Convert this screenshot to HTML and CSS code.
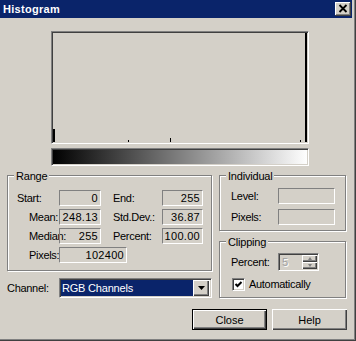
FILE: index.html
```html
<html>
	<head>
		<link rel="stylesheet" href="styles.css">
	</head>
	<body>
		<div class="window">
			<div class="frame">
				<div class="title-bar">
					<span class="title-text">Histogram</span>
					<div class="caption-btn">
						<svg width="10" height="9" viewBox="0 0 10 9"><path d="M1.5 1 L8.5 8 M8.5 1 L1.5 8" stroke="#000" stroke-width="1.8" fill="none"/></svg>
					</div>
				</div>
				<div class="client">
					<div class="histogram">
						<svg class="plot" width="254" height="109" viewBox="0 0 254 109">
							<rect x="0" y="96" width="2" height="13" fill="#000"/>
							<rect x="75" y="107" width="1" height="2" fill="#000"/>
							<rect x="117" y="105" width="1" height="4" fill="#000"/>
							<rect x="247" y="107" width="1" height="2" fill="#000"/>
							<rect x="252" y="0" width="2" height="109" fill="#000"/>
						</svg>
					</div>
					<div class="gradient"></div>
					<div class="middle">
						<div class="left-col">
							<div class="group range">
								<span class="group-title">Range</span>
								<div class="range-grid">
									<span class="label">Start:</span><span class="value">0</span>
									<span class="label">End:</span><span class="value">255</span>
									<span class="label">Mean:</span><span class="value">248.13</span>
									<span class="label">Std.Dev.:</span><span class="value">36.87</span>
									<span class="label">Median:</span><span class="value">255</span>
									<span class="label">Percent:</span><span class="value">100.00</span>
									<span class="label">Pixels:</span><span class="value wide">102400</span>
								</div>
							</div>
							<div class="channel-row">
								<span class="label channel-label">Channel:</span>
								<div class="combo">
									<span class="combo-text">RGB Channels</span>
									<span class="combo-btn">
										<svg width="7" height="4" viewBox="0 0 7 4"><polygon points="0,0 7,0 3.5,4" fill="#000"/></svg>
									</span>
								</div>
							</div>
						</div>
						<div class="right-col">
							<div class="group individual">
								<span class="group-title">Individual</span>
								<div class="field-row">
									<span class="label side-label">Level:</span><span class="value side-value"></span>
								</div>
								<div class="field-row">
									<span class="label side-label">Pixels:</span><span class="value side-value"></span>
								</div>
							</div>
							<div class="group clipping">
								<span class="group-title">Clipping</span>
								<div class="field-row">
									<span class="label side-label">Percent:</span>
									<div class="spinner">
										<span class="spin-text">5</span>
										<div class="spin-btns">
											<span class="spin-btn"><span class="arrow-up"></span></span>
											<span class="spin-btn"><span class="arrow-down"></span></span>
										</div>
									</div>
								</div>
								<div class="check-row">
									<span class="checkbox">
										<svg width="9" height="9" viewBox="0 0 9 9"><path d="M1.5 4 L3.5 6 L7.5 2" stroke="#000" stroke-width="2" fill="none"/></svg>
									</span>
									<span class="check-label">Automatically</span>
								</div>
							</div>
						</div>
					</div>
					<div class="buttons">
						<div class="btn default">Close</div>
						<div class="btn">Help</div>
					</div>
				</div>
			</div>
		</div>
	</body>
</html>
```

FILE: styles.css
```css
html,body{
	margin:0;
	padding:0;
}
body{
	font-family:"Liberation Sans", Arial, sans-serif;
	font-size:11px;
	color:#000;
	background:#d4d0c8;
}
.window{
	width:356px;
	height:341px;
	box-sizing:border-box;
	border-right:1px solid #404040;
	border-bottom:1px solid #404040;
	background:#d4d0c8;
}
.frame{
	height:100%;
	box-sizing:border-box;
	border-right:1px solid #808080;
	border-bottom:1px solid #808080;
	padding:0 2px 2px 0;
}
.title-bar{
	height:18px;
	background:#0a246a;
	display:flex;
	align-items:center;
	justify-content:space-between;
	padding:0 1px 0 3px;
}
.title-text{
	color:#fff;
	font-weight:bold;
	letter-spacing:0.3px;
}
.caption-btn{
	width:16px;
	height:14px;
	box-sizing:border-box;
	background:#d4d0c8;
	box-shadow:inset -1px -1px #404040, inset 1px 1px #fff, inset -2px -2px #808080;
	display:flex;
	align-items:center;
	justify-content:center;
}
.caption-btn svg{
	display:block;
	margin:-1px 0 0 -1px;
}
.client{
	padding:13px 6px 0 7px;
}

/* sunken boxes */
.histogram,.gradient{
	width:258px;
	box-sizing:border-box;
	margin-left:44px;
	border:1px solid;
	border-color:#808080 #fff #fff #808080;
	box-shadow:inset 1px 1px #404040;
	padding:1px;
}
.histogram{
	height:113px;
}
.histogram .plot{
	display:block;
}
.gradient{
	height:18px;
	margin-top:4px;
	background:linear-gradient(to right, #000, #fff);
	background-clip:content-box;
}

.middle{
	display:flex;
	gap:7px;
	margin-top:9px;
}
.left-col{
	width:205px;
}
.right-col{
	width:127px;
	display:flex;
	flex-direction:column;
	gap:10px;
}
.group{
	position:relative;
	box-sizing:border-box;
	border:1px solid #808080;
	box-shadow:inset 1px 1px #fff, 1px 1px #fff;
}
.group-title{
	position:absolute;
	top:-6px;
	left:6px;
	padding:0 2px;
	line-height:13px;
	letter-spacing:-0.2px;
	background:#d4d0c8;
}
.label{
	line-height:16px;
	white-space:nowrap;
	letter-spacing:-0.3px;
}
.value{
	height:16px;
	box-sizing:border-box;
	border:1px solid;
	border-color:#808080 #fff #fff #808080;
	text-align:right;
	padding-right:2px;
	line-height:14px;
	letter-spacing:0.3px;
}

.range{
	height:96px;
	padding:14px 0 0 9px;
}
.range-grid{
	display:grid;
	grid-template-columns:42px 42px 61px 41px;
	row-gap:3px;
}
.range-grid .value + .label{
	padding-left:12px;
}
.range-grid .value.wide{
	grid-column:span 2;
	width:68px;
}

.channel-row{
	display:flex;
	align-items:center;
	height:20px;
	margin-top:7px;
}
.channel-label{
	width:52px;
}
.combo{
	width:153px;
	height:20px;
	box-sizing:border-box;
	border:1px solid;
	border-color:#808080 #fff #fff #808080;
	box-shadow:inset 1px 1px #404040, inset -1px -1px #d4d0c8;
	padding:1px 2px 1px 1px;
	background:#fff;
	display:flex;
}
.combo-text{
	flex:1;
	background:#0a246a;
	color:#fff;
	padding-left:1px;
	line-height:16px;
	letter-spacing:-0.2px;
}
.combo-btn{
	width:16px;
	height:16px;
	box-sizing:border-box;
	background:#d4d0c8;
	box-shadow:inset 1px 1px #fff, inset -1px -1px #404040, inset -2px -2px #808080;
	display:flex;
	align-items:center;
	justify-content:center;
}
.combo-btn svg{
	display:block;
}

.individual{
	height:56px;
	padding:12px 0 0 11px;
}
.clipping{
	height:57px;
	padding:11px 0 0 11px;
}
.field-row{
	display:flex;
	align-items:center;
}
.individual .field-row + .field-row{
	margin-top:5px;
}
.side-label{
	width:47px;
}
.side-value{
	width:57px;
}

.spinner{
	width:41px;
	height:18px;
	box-sizing:border-box;
	border:1px solid;
	border-color:#808080 #fff #fff #808080;
	box-shadow:inset 1px 1px #404040, inset -1px -1px #d4d0c8;
	padding:1px;
	display:flex;
}
.spin-text{
	flex:1;
	color:#a0a0a0;
	text-shadow:1px 1px #fff;
	padding-left:2px;
	line-height:14px;
}
.spin-btns{
	width:15px;
	display:flex;
	flex-direction:column;
}
.spin-btn{
	flex:1;
	background:#d4d0c8;
	box-shadow:inset 1px 1px #fff, inset -1px -1px #404040, inset -2px -2px #808080;
	display:flex;
	align-items:center;
	justify-content:center;
}
.arrow-up,.arrow-down{
	width:0;
	height:0;
	border-left:2.5px solid transparent;
	border-right:2.5px solid transparent;
}
.arrow-up{
	border-bottom:3px solid #808080;
}
.arrow-down{
	border-top:3px solid #808080;
}

.check-row{
	display:flex;
	align-items:center;
	margin-top:7px;
}
.checkbox{
	width:13px;
	height:13px;
	box-sizing:border-box;
	margin-left:1px;
	border:1px solid;
	border-color:#808080 #fff #fff #808080;
	box-shadow:inset 1px 1px #404040, inset -1px -1px #d4d0c8;
	padding:1px;
	background:#fff;
}
.checkbox svg{
	display:block;
}
.check-label{
	margin-left:4px;
	line-height:13px;
	letter-spacing:-0.3px;
}

.buttons{
	display:flex;
	justify-content:flex-end;
	gap:5px;
	margin-top:11px;
	margin-right:-1px;
}
.btn{
	width:75px;
	height:21px;
	box-sizing:border-box;
	display:flex;
	align-items:center;
	justify-content:center;
	box-shadow:inset 1px 1px #fff, inset -1px -1px #404040, inset -2px -2px #808080;
}
.btn.default{
	border:1px solid #000;
}
```
